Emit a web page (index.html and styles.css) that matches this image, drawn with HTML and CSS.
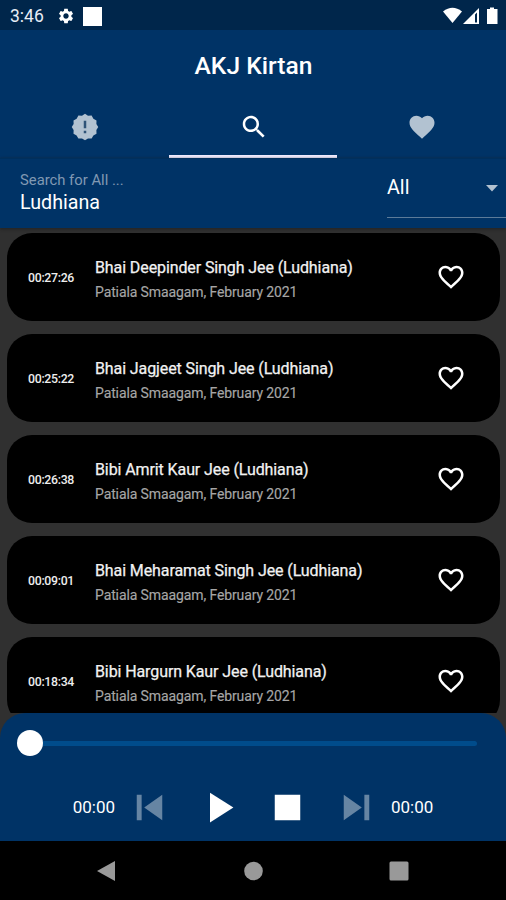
FILE: index.html
```html
<!DOCTYPE html>
<html lang="en">
<head>
<meta charset="utf-8">
<title>AKJ Kirtan</title>
<link rel="stylesheet" href="styles.css">
</head>
<body>
<svg class="defs" aria-hidden="true">
  <symbol id="heart-outline" viewBox="0 0 24 24"><path d="M16.5 3c-1.74 0-3.41.81-4.5 2.09C10.910 3.810 9.240 3 7.500 3 4.420 3 2 5.420 2 8.500c0 3.780 3.400 6.860 8.550 11.540L12 21.350l1.450-1.320C18.600 15.360 22 12.280 22 8.500 22 5.420 19.580 3 16.500 3zm-4.400 15.550l-.1.100-.1-.1C7.140 14.240 4 11.390 4 8.500 4 6.500 5.500 5 7.500 5c1.540 0 3.040.99 3.570 2.360h1.870C13.460 5.990 14.960 5 16.500 5c2 0 3.500 1.500 3.500 3.500 0 2.890-3.140 5.740-7.900 10.050z"/></symbol>
</svg>
<div class="app">
  <header class="status">
    <span class="clock">3:46</span>
    <svg class="gear" viewBox="0 0 24 24"><path d="M19.140 12.940c.040-.3.060-.61.060-.94 0-.32-.02-.64-.07-.94l2.030-1.580c.18-.14.23-.41.12-.61l-1.920-3.320c-.12-.22-.37-.29-.59-.22l-2.390.96c-.5-.38-1.030-.7-1.620-.94l-.36-2.540c-.04-.24-.24-.41-.48-.41h-3.840c-.24 0-.43.17-.47.41l-.36 2.540c-.59.24-1.130.57-1.620.94l-2.390-.96c-.22-.08-.47 0-.59.22L2.740 8.870c-.12.21-.08.47.12.61l2.030 1.580c-.05.3-.09.63-.09.94s.02.64.07.94l-2.030 1.580c-.18.14-.23.41-.12.61l1.920 3.320c.12.22.37.29.59.22l2.390-.96c.5.38 1.030.7 1.620.94l.36 2.540c.05.24.24.41.48.41h3.840c.24 0 .44-.17.47-.41l.36-2.540c.59-.24 1.130-.56 1.620-.94l2.390.96c.22.08.47 0 .59-.22l1.920-3.320c.12-.22.07-.47-.12-.61l-2.010-1.580zM12 15.600c-1.980 0-3.600-1.620-3.600-3.600s1.620-3.600 3.600-3.600 3.600 1.620 3.600 3.600-1.620 3.600-3.600 3.600z"/></svg>
    <span class="notice"></span>
    <svg class="signals" viewBox="0 0 56 18"><path d="M0 4.500Q9.500-3 19 4.500L9.500 16z"/><path fill-rule="evenodd" d="M20 17L36 1v16zM32 7.500v8h2V5.500z"/><path d="M44 2h3V.5h4V2h3.500v15H44z"/></svg>
  </header>
  <h1 class="title">AKJ Kirtan</h1>
  <nav class="tabs">
    <a class="tab"><svg class="icon badge" viewBox="0 0 24 24"><path d="M22.600 12L21.100 14.400 21.200 17.300 18.700 18.700 17.300 21.200 14.400 21.100 12 22.600 9.600 21.100 6.700 21.200 5.300 18.700 2.800 17.300 2.900 14.400 1.400 12 2.900 9.600 2.800 6.700 5.300 5.300 6.700 2.800 9.600 2.900 12 1.400 14.400 2.900 17.300 2.800 18.700 5.300 21.200 6.700 21.100 9.600z"/><path class="mark" d="M11 7h2v6h-2zM11 15h2v2h-2z"/></svg></a>
    <a class="tab active"><svg class="icon" viewBox="0 0 24 24"><path d="M15.500 14h-.79l-.28-.27C15.410 12.590 16 11.110 16 9.500 16 5.910 13.090 3 9.500 3S3 5.910 3 9.500 5.910 16 9.500 16c1.610 0 3.090-.59 4.230-1.570l.27.28v.79l5 4.990L20.490 19l-4.990-5zm-6 0C7.010 14 5 11.990 5 9.500S7.010 5 9.500 5 14 7.010 14 9.500 11.990 14 9.500 14z"/></svg></a>
    <a class="tab"><svg class="icon" viewBox="0 0 24 24"><path d="M12 21.350l-1.450-1.320C5.400 15.360 2 12.280 2 8.500 2 5.420 4.420 3 7.500 3c1.740 0 3.410.81 4.500 2.090C13.090 3.810 14.760 3 16.500 3 19.580 3 22 5.420 22 8.500c0 3.780-3.400 6.860-8.550 11.540L12 21.350z"/></svg></a>
  </nav>
  <section class="search">
    <div class="query"><span class="hint">Search for All ...</span><span class="value">Ludhiana</span></div>
    <div class="filter"><span>All</span><svg viewBox="0 0 12 7"><path d="M0 0h12L6 6.500z"/></svg></div>
  </section>
  <main class="list">
    <article class="card"><time>00:27:26</time><div class="info"><h2>Bhai Deepinder Singh Jee (Ludhiana)</h2><p>Patiala Smaagam, February 2021</p></div><svg class="icon"><use href="#heart-outline"/></svg></article>
    <article class="card"><time>00:25:22</time><div class="info"><h2>Bhai Jagjeet Singh Jee (Ludhiana)</h2><p>Patiala Smaagam, February 2021</p></div><svg class="icon"><use href="#heart-outline"/></svg></article>
    <article class="card"><time>00:26:38</time><div class="info"><h2>Bibi Amrit Kaur Jee (Ludhiana)</h2><p>Patiala Smaagam, February 2021</p></div><svg class="icon"><use href="#heart-outline"/></svg></article>
    <article class="card"><time>00:09:01</time><div class="info"><h2>Bhai Meharamat Singh Jee (Ludhiana)</h2><p>Patiala Smaagam, February 2021</p></div><svg class="icon"><use href="#heart-outline"/></svg></article>
    <article class="card"><time>00:18:34</time><div class="info"><h2>Bibi Hargurn Kaur Jee (Ludhiana)</h2><p>Patiala Smaagam, February 2021</p></div><svg class="icon"><use href="#heart-outline"/></svg></article>
  </main>
  <footer class="player">
    <div class="seek"><span class="thumb"></span><span class="track"></span></div>
    <div class="controls">
      <span class="time">00:00</span>
      <svg class="btn dim" viewBox="0 0 24 24"><path d="M6 6h2.300v12H6zm3.500 6l8.500 6V6z"/></svg>
      <svg class="btn" viewBox="0 0 24 24"><path d="M8 5v14l11-7z"/></svg>
      <svg class="btn" viewBox="0 0 24 24"><path d="M6 6h12v12H6z"/></svg>
      <svg class="btn dim" viewBox="0 0 24 24"><path d="M6 18l8.500-6L6 6v12zM15.700 6v12H18V6z"/></svg>
      <span class="time">00:00</span>
    </div>
  </footer>
  <nav class="system">
    <svg viewBox="0 0 20 22"><path d="M0 11L18 1v20z"/></svg>
    <svg viewBox="0 0 20 22"><circle cx="10.500" cy="11" r="9.300"/></svg>
    <svg viewBox="0 0 20 22"><rect x=".5" y="1.500" width="19" height="19" rx="1.500"/></svg>
  </nav>
</div>
</body>
</html>
```

FILE: styles.css
```css
* { box-sizing: border-box; margin: 0; padding: 0; }
body { background: #303030; color: #fff; font-family: Roboto, "Liberation Sans", sans-serif; }
svg { fill: currentColor; flex: none; }
.defs { display: none; }
.app { display: flex; flex-direction: column; width: 506px; height: 900px; overflow: hidden; }
.status { display: flex; align-items: center; height: 30px; padding: 2px 7px 0 10px; background: #00264b; }
.clock { width: 47px; font-size: 17.5px; color: #e8edf5; }
.gear { width: 18px; height: 18px; }
.notice { width: 19px; height: 19px; margin-left: 8px; background: #fff; }
.signals { width: 56px; height: 18px; margin-left: auto; }
.title { height: 66px; background: #003366; text-align: center; font-size: 24.600px; font-weight: 500; line-height: 71px; padding-left: 1px; }
.tabs { display: flex; height: 62px; background: #003366; }
.tab { display: flex; flex: 1; justify-content: center; padding: 16px 0 0 1px; color: #b2c2d1; }
.tab.active { color: #fff; border-bottom: 3px solid #f0ebff; }
.icon { width: 30px; height: 30px; }
.mark { fill: #2f5378; }
.search { display: flex; justify-content: space-between; height: 70px; padding-left: 20px; background: #003366; border-top: 1px solid #002f5c; box-shadow: 0 1px 3px #222; }
.query { display: flex; flex-direction: column; padding-top: 12px; }
.hint { font-size: 14.800px; line-height: 19px; color: #8099b3; }
.value { font-size: 19.700px; line-height: 26px; }
.filter { display: flex; align-items: center; justify-content: space-between; width: 119px; height: 59px; padding-right: 8px; border-bottom: 1px solid #5c7b99; font-size: 19.700px; }
.filter span { margin-top: -1px; }
.filter svg { width: 12px; height: 7px; color: #b2c2d1; margin-top: 1px; }
.list { display: flex; flex: 1; min-height: 0; flex-direction: column; gap: 13px; padding: 5px 6px 0 7px; overflow: hidden; }
.card { display: flex; flex: none; align-items: center; height: 88px; padding: 0 34px 0 21px; background: #000; border-radius: 25px; }
.card time { width: 67px; padding-top: 1px; font-size: 12.300px; font-weight: 500; letter-spacing: -.3px; color: #eee; }
.info { flex: 1; white-space: nowrap; padding-top: 5px; }
.info h2 { font-size: 16px; font-weight: 400; line-height: 25px; letter-spacing: -.1px; color: #f2f2f2; -webkit-text-stroke: .25px #f2f2f2; }
.info p { font-size: 14px; line-height: 25px; letter-spacing: -.11px; color: #a6a6a6; -webkit-text-stroke: .15px #a6a6a6; }
.player { height: 128px; flex: none; background: #003366; border-radius: 25px 25px 0 0; }
.seek { display: flex; align-items: center; height: 60px; padding: 0 29px 0 17px; }
.thumb { width: 26px; height: 26px; border-radius: 50%; background: #fff; }
.track { flex: 1; height: 5px; background: #004c8b; border-radius: 0 3px 3px 0; }
.controls { display: flex; align-items: center; justify-content: center; height: 68px; }
.btn { width: 51px; height: 51px; margin: 0 9px; }
.dim { color: #6685a3; }
.time { font-size: 17px; }
.system { display: flex; align-items: center; gap: 126px; height: 59px; padding-left: 97px; background: #000; color: #999; }
.system svg { width: 20px; height: 22px; }
```
